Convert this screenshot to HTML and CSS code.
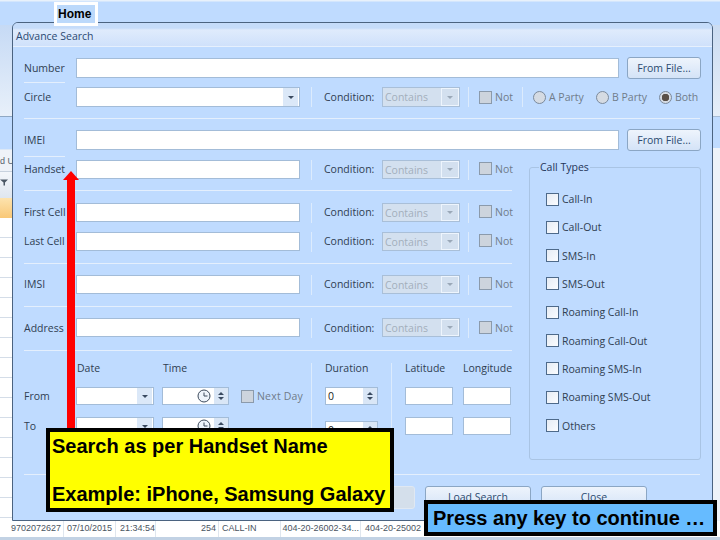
FILE: index.html
```html
<!DOCTYPE html>
<html lang="en">
<head>
<meta charset="utf-8">
<title>Advance Search</title>
<link rel="stylesheet" href="styles.css">
</head>
<body>
<div class="app">
  <div class="ribbon"><span class="tab">Home</span></div>
  <div class="under">
    <div class="leftbg">
      <div class="lpanel"></div>
      <div class="lblue"></div>
      <div class="lhead">d U</div>
      <div class="lfilter"><svg class="funnel" viewBox="0 0 8 7"><path d="M0 .5H8L5 3.5V6.5H3.5V3.5Z"/></svg></div>
      <div class="lsel"></div>
      <div class="lrows"></div>
    </div>
    <div class="rightbg">
      <div class="rpanel"></div>
      <div class="rblue"></div>
      <div class="rrows"></div>
    </div>
  </div>
  <div class="datarow">
    <span class="c c1">9702072627</span><span class="c c2">07/10/2015</span><span class="c c3">21:34:54</span><span class="c c4">254</span><span class="c c5">CALL-IN</span><span class="c c6">404-20-26002-34...</span><span class="c c7">404-20-25002</span>
  </div>

  <div class="dialog">
    <div class="titlebar">Advance Search</div>
    <div class="body">
      <div class="row r1"><label class="lb">Number</label><div class="in wide"></div><div class="btn file">From File...</div></div>
      <div class="short s1"></div>
      <div class="row r2">
        <label class="lb">Circle</label><div class="in mid combo"><span class="drop"><i class="tri"></i></span></div>
        <span class="vs"></span><span class="cond">Condition:</span><div class="sel"><span>Contains</span><b><i class="tri"></i></b></div>
        <span class="vs v2"></span><span class="chk dis"></span><span class="gray not">Not</span>
        <span class="vs v3"></span>
        <span class="radio"></span><span class="gray rt">A Party</span><span class="radio"></span><span class="gray rt">B Party</span><span class="radio on"></span><span class="gray">Both</span>
      </div>
      <div class="sep full s2"></div>
      <div class="row r3"><label class="lb">IMEI</label><div class="in wide"></div><div class="btn file">From File...</div></div>
      <div class="short s3"></div>

      <div class="lower">
        <div class="leftcol">
          <div class="row r4 lift"><label class="lb">Handset</label><div class="in mid"></div><span class="vs"></span><span class="cond">Condition:</span><div class="sel"><span>Contains</span><b><i class="tri"></i></b></div><span class="vs v2"></span><span class="chk dis"></span><span class="gray not">Not</span></div>
          <div class="sep s4"></div>
          <div class="row r5 lift"><label class="lb">First Cell</label><div class="in mid"></div><span class="vs"></span><span class="cond">Condition:</span><div class="sel"><span>Contains</span><b><i class="tri"></i></b></div><span class="vs v2"></span><span class="chk dis"></span><span class="gray not">Not</span></div>
          <div class="row r6 lift"><label class="lb">Last Cell</label><div class="in mid"></div><span class="vs"></span><span class="cond">Condition:</span><div class="sel"><span>Contains</span><b><i class="tri"></i></b></div><span class="vs v2"></span><span class="chk dis"></span><span class="gray not">Not</span></div>
          <div class="sep s5"></div>
          <div class="row r7 lift"><label class="lb">IMSI</label><div class="in mid"></div><span class="vs"></span><span class="cond">Condition:</span><div class="sel"><span>Contains</span><b><i class="tri"></i></b></div><span class="vs v2"></span><span class="chk dis"></span><span class="gray not">Not</span></div>
          <div class="sep s6"></div>
          <div class="row r8"><label class="lb">Address</label><div class="in mid"></div><span class="vs"></span><span class="cond">Condition:</span><div class="sel"><span>Contains</span><b><i class="tri"></i></b></div><span class="vs v2"></span><span class="chk dis"></span><span class="gray not">Not</span></div>
          <div class="sep s7"></div>

          <div class="dates">
            <div class="dgrid">
              <span></span><span class="hd">Date</span><span class="hd timehd">Time</span><span></span>
              <label class="lb">From</label>
              <div class="in date"><span class="drop"><i class="tri"></i></span></div>
              <div class="in time"><svg class="clock" viewBox="0 0 14 14"><circle cx="7" cy="7" r="6"/><path d="M7 3.5V7H10.5"/></svg><span class="spin"><i class="up"></i><i class="tri"></i></span></div>
              <div class="nextday"><span class="chk dis"></span><span class="gray">Next Day</span></div>
              <label class="lb">To</label>
              <div class="in date"><span class="drop"><i class="tri"></i></span></div>
              <div class="in time"><svg class="clock" viewBox="0 0 14 14"><circle cx="7" cy="7" r="6"/><path d="M7 3.5V7H10.5"/></svg><span class="spin"><i class="up"></i><i class="tri"></i></span></div>
              <span></span>
            </div>
            <span class="vs tall"></span>
            <div class="durgrid">
              <span class="hd">Duration</span>
              <div class="in dur">0<span class="spin"><i class="up"></i><i class="tri"></i></span></div>
              <div class="in dur dur2">0<span class="spin"><i class="up"></i><i class="tri"></i></span></div>
            </div>
            <span class="vs tall"></span>
            <div class="geogrid">
              <span class="hd">Latitude</span><span class="hd">Longitude</span>
              <div class="in geo"></div><div class="in geo"></div>
              <div class="in geo"></div><div class="in geo"></div>
            </div>
          </div>
        </div>

        <fieldset class="types">
          <legend>Call Types</legend>
          <div class="t"><span class="chk"></span>Call-In</div>
          <div class="t"><span class="chk"></span>Call-Out</div>
          <div class="t"><span class="chk"></span>SMS-In</div>
          <div class="t"><span class="chk"></span>SMS-Out</div>
          <div class="t"><span class="chk"></span>Roaming Call-In</div>
          <div class="t"><span class="chk"></span>Roaming Call-Out</div>
          <div class="t"><span class="chk"></span>Roaming SMS-In</div>
          <div class="t"><span class="chk"></span>Roaming SMS-Out</div>
          <div class="t"><span class="chk"></span>Others</div>
        </fieldset>
      </div>

      <div class="sep full s8"></div>
      <div class="actions">
        <div class="btn act faded"></div>
        <div class="btn act">Load Search</div>
        <div class="btn act">Close</div>
      </div>
    </div>
  </div>

  <svg class="arrow" viewBox="0 0 16 262"><path d="M8 0L16 9H12V262H4V9H0Z"/></svg>
  <div class="callout"><p>Search as per Handset Name</p><p>Example: iPhone, Samsung Galaxy</p></div>
  <div class="press">Press any key to continue …</div>
</div>
</body>
</html>
```
FILE: styles.css
```css
* { box-sizing: border-box; }
html, body { margin: 0; padding: 0; }
body { width: 720px; height: 540px; overflow: hidden; }
.app { position: relative; width: 720px; height: 540px; overflow: hidden; background: #fff; font-family: "Liberation Sans", sans-serif; }

.ribbon { height: 25px; background: linear-gradient(#e8f1fb 0, #e8f1fb 1px, #bfdbff 2px); padding: 2px 0 0 54px; }
.tab { display: block; position: relative; z-index: 2; width: 44px; height: 24px; background: #bcd9fb; border: 3px solid #fff; font: bold 12px/19px "Liberation Sans", sans-serif; color: #000; padding-left: 1px; }

.under { height: 496px; display: flex; justify-content: space-between; }
.leftbg { width: 13px; display: flex; flex-direction: column; }
.lpanel { height: 92px; background: linear-gradient(#c6daf5, #e8f0fa); border-bottom: 1px solid #8fa8c4; }
.lblue { height: 33px; background: #bfdbff; border-bottom: 1px solid #dce8f6; }
.lhead { height: 22px; background: #eef2f8; font: 9px/22px "Liberation Sans", sans-serif; color: #58626e; padding-left: 0; white-space: nowrap; overflow: hidden; border-bottom: 1px solid #c8d2de; }
.lfilter { height: 26px; background: linear-gradient(#f4f7fb, #dfe6ef); padding: 7px 0 0 0; }
.funnel { display: block; width: 8px; height: 7px; fill: #4c5866; }
.lsel { height: 20px; background: linear-gradient(#fde3ae, #f9c877); }
.lrows { flex: 1; background: repeating-linear-gradient(#fff 0, #fff 19px, #d4dde8 19px, #d4dde8 20px); }
.rightbg { width: 7px; display: flex; flex-direction: column; }
.rpanel { height: 92px; background: linear-gradient(#cbdcf2, #e6eef8); border-bottom: 1px solid #a8bdd6; }
.rblue { height: 31px; background: #bfdbff; }
.rrows { flex: 1; background: #eef3f9; }

.datarow { height: 19px; background: #fff; border-bottom: 3px solid #c2d2e4; display: flex; font: 9px/15px "Liberation Sans", sans-serif; color: #4a545f; }
.c { flex: none; border-right: 1px solid #dfe6ee; padding: 0 3px; white-space: nowrap; overflow: hidden; }
.c1 { width: 64px; padding-left: 11px; }
.c2 { width: 52px; }
.c3 { width: 40px; padding-left: 4px; }
.c4 { width: 63px; text-align: right; padding-right: 2px; }
.c5 { width: 62px; }
.c6 { width: 80px; text-align: right; padding: 0 1px 0 0; }
.c7 { width: 63px; padding-left: 4px; border-right: 0; }

.dialog { position: absolute; left: 12px; top: 22px; width: 701px; height: 499px; background: #bfdbff; border: 1px solid #4b6380; border-radius: 6px 6px 0 0; overflow: hidden; }
.titlebar { height: 24px; background: linear-gradient(#c5dcfa 0, #c5dcfa 5px, #dfebfc 7px, #cfe1fb 100%); border-bottom: 1px solid #e6f0fd; font: 10.5px/26px "Open Sans", sans-serif; color: #2c4a72; padding-left: 3px; }
.body { padding: 11px 0 0 11px; color: #2f3e52; font: 10.5px "Open Sans", sans-serif; }
.row { display: flex; align-items: center; height: 20px; white-space: nowrap; }
.lb { width: 52px; flex: none; color: #2f3e52; align-self: center; }
.in { background: #fff; border: 1px solid #a3bcd8; position: relative; height: 100%; flex: none; }
.wide { width: 543px; }
.mid { width: 224px; }
.file { margin-left: 8px; width: 74px; height: 22px; }
.btn { flex: none; background: linear-gradient(#eef4fc, #d4e3f7); border: 1px solid #8ba6c4; border-radius: 3px; text-align: center; color: #2a4a70; line-height: 20px; }
.drop { position: absolute; right: 1px; top: 0; bottom: 0; width: 15px; background: #dbe8f8; display: flex; align-items: center; justify-content: center; }
.tri { display: block; width: 0; height: 0; border: 3px solid transparent; border-top: 3px solid #3a4a60; border-bottom: 0; }
.up { display: block; width: 0; height: 0; border: 3px solid transparent; border-bottom: 3px solid #3a4a60; border-top: 0; }
.vs { flex: none; width: 1px; height: 20px; background: #dcebfd; margin: 0 12px 0 11px; }
.cond { flex: none; width: 58px; }
.sel { flex: none; width: 78px; height: 100%; background: #d3e0ef; border: 1px solid #a9bfd8; display: flex; justify-content: space-between; align-items: center; padding-left: 2px; color: #a3afbc; }
.sel b { width: 18px; height: 100%; background: #d3e0ef; border: 1px solid #eef5fd; display: flex; align-items: center; justify-content: center; }
.sel .tri { border-top-color: #9aa8b8; }
.v2 { margin: 0 10px 0 8px; }
.v3 { margin: 0 10px 0 8px; }
.chk { flex: none; display: inline-block; width: 13px; height: 13px; border: 1px solid #4e6a8a; background: linear-gradient(135deg, #e6ecf4, #fafcff); }
.chk.dis { background: #cdd4dd; border-color: #8b9aab; }
.gray { color: #707c8a; margin-left: 3px; }
.not { width: 19px; }
.radio { flex: none; width: 13px; height: 13px; border-radius: 50%; border: 1px solid #7b8a9c; background: #d5dbe3; }
.radio.on { background: radial-gradient(circle, #5a5048 0, #5a5048 3.5px, #d5dbe3 4px); }
.rt { width: 44px; margin-right: 3px; }
.lift .lb, .lift .cond, .lift .gray, .lift .chk { margin-bottom: 2px; }

.sep { height: 1px; background: #e4effd; width: 488px; }
.full { width: 676px; }
.short { width: 41px; height: 1px; background: #e4effd; }
.s1 { margin-top: 4px; }
.r2 { margin-top: 4px; }
.s2 { margin-top: 11px; }
.r3 { margin-top: 11px; }
.s3 { margin-top: 6px; }

.lower { display: flex; height: 278px; }
.leftcol { width: 505px; flex: none; }
.r4 { margin-top: 3px; height: 19px; }
.s4 { margin-top: 11px; }
.r5 { margin-top: 12px; height: 19px; }
.r6 { margin-top: 10px; height: 19px; }
.s5 { margin-top: 12px; }
.r7 { margin-top: 11px; height: 19px; }
.s6 { margin-top: 12px; }
.r8 { margin-top: 11px; height: 19px; }
.s7 { margin-top: 13px; }

.dates { display: flex; height: 73px; margin-top: 11px; }
.hd { color: #2f3e52; line-height: 12px; white-space: nowrap; }
.dgrid { display: grid; flex: none; grid-template-columns: 52px 78px 75px 71px; grid-template-rows: 13px 18px 18px; row-gap: 12px; width: 276px; }
.dgrid .hd { padding-left: 1px; }
.dgrid .timehd { padding-left: 9px; }
.date { width: 78px; height: 18px; }
.time { width: 67px; height: 18px; margin-left: 8px; }
.nextday { display: flex; align-items: center; margin-left: 12px; white-space: nowrap; }
.nextday .gray { letter-spacing: .2px; }
.clock { position: absolute; right: 17px; top: 1px; width: 14px; height: 14px; fill: #eef4fb; stroke: #3d4a5c; stroke-width: 1; }
.spin { position: absolute; right: 0; top: 0; bottom: 0; width: 14px; background: #d9e6f6; display: flex; flex-direction: column; align-items: center; justify-content: center; gap: 2px; }
.dates .vs.tall { height: 72px; margin: 1px 13px 0 11px; }
.dates .vs.tall ~ .vs.tall { margin-left: 13px; }
.durgrid { display: grid; flex: none; width: 53px; grid-template-rows: 13px 18px 18px; row-gap: 12px; }
.dur { height: 18px; padding-left: 2px; line-height: 16px; color: #222; }
.dur2 { margin-top: 4px; }
.geogrid { display: grid; flex: none; grid-template-columns: 48px 48px; grid-template-rows: 13px 18px 18px; column-gap: 10px; row-gap: 12px; }
.geo { height: 18px; }

.types { flex: none; align-self: flex-start; width: 172px; height: 300px; margin: 3px 0 0 0; padding: 18px 0 0 16px; border: 1px solid #a9c4e4; border-radius: 3px; }
.types legend { padding: 0 1px; margin-left: -7px; color: #1f3558; font-size: 10.5px; }
.t { display: flex; align-items: center; gap: 3px; height: 14px; margin-bottom: 14.33px; color: #2f3e52; white-space: nowrap; }

.s8 { margin-top: 39px; }
.actions { display: flex; gap: 10px; padding-left: 285px; margin-top: 11px; }
.act { width: 106px; height: 23px; }
.faded { background: #d4dfeb; border-color: #e0e8f2; }

.arrow { position: absolute; left: 63px; top: 171px; width: 16px; height: 262px; fill: #f00; }
.callout { position: absolute; left: 46px; top: 428px; width: 348px; height: 84px; background: #ff0; border: 4px solid #000; padding: 3px 0 0 2px; }
.callout p { margin: 0 0 25px; font: bold 20px/23px "Liberation Sans", sans-serif; color: #000; white-space: nowrap; }
.press { position: absolute; left: 424px; top: 500px; width: 293px; height: 36px; background: #66bbff; border: 4px solid #000; font: bold 20px/28px "Liberation Sans", sans-serif; color: #000; padding-left: 5px; white-space: nowrap; }
```
